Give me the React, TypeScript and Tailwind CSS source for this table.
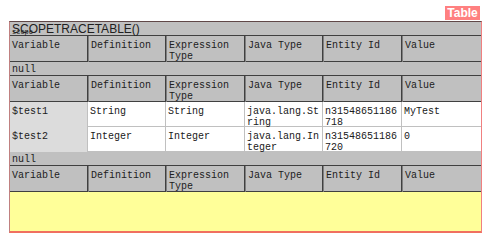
const mono = "font-['Liberation_Mono','Courier_New',monospace]";

const cols = "grid grid-cols-[78px_78px_79px_78px_79px_1fr]";

const HeaderRow = () => {
    const names = ["Variable", "Definition", "Expression Type", "Java Type", "Entity Id", "Value"];
    return (
        <div className={`${cols} h-[26px] bg-[#c0c0c0] border-b border-[#404040]`}>
            {names.map((n, i) => (
                <div key={n} className={`px-[2px] pt-[4px] text-[10px] leading-[11px] text-[#202020] ${mono} ${i < 5 ? "border-r border-[#404040]" : ""} ${i > 0 ? "border-l border-l-[#808080]" : ""}`}>
                    {n}
                </div>
            ))}
        </div>
    )
}

const NullRow = () => (
    <div className={`h-[14px] bg-[#c0c0c0] border-b border-[#404040] px-[2px] pt-[2px] text-[10px] leading-[11px] text-[#202020] ${mono}`}>null</div>
)

const DataRow = ({ cells }: { cells: string[] }) => (
    <div className={`${cols} h-[25px] bg-white border-b border-[#c0c0c0]`}>
        {cells.map((c, i) => (
            <div key={i} className={`px-[2px] pt-[4px] text-[10px] leading-[11px] text-[#202020] break-all ${mono} ${i === 0 ? "bg-[#dcdcdc]" : ""} ${i < 5 ? "border-r border-[#c0c0c0]" : ""}`}>
                {c}
            </div>
        ))}
    </div>
)

export default function App() {
    return (
        <div className="relative w-[485px] h-[243px] bg-white pt-[21px] pl-[9px] overflow-hidden">
            <div className="absolute left-[445px] top-[6px] w-[35px] h-[14px] bg-[#ff8080] text-white font-bold text-[12px] leading-[14px] text-center font-['Liberation_Sans',Arial,sans-serif]">
                Table
            </div>

            <div className="w-[473px] h-[212px] flex flex-col bg-[#ffff99] border-l border-l-[#c08080] border-r border-r-[#f08080] border-b-2 border-b-[#f07060] border-t border-t-[#604848]">
                <div className="relative h-[14px] bg-[#c0c0c0] border-b border-[#404040] px-[2px] text-[12px] leading-[14px] text-[#202020] font-['Liberation_Sans',Arial,sans-serif]">
                    SCOPETRACETABLE()
                    <span className={`absolute left-[2px] top-[7px] text-[7px] leading-[7px] ${mono}`}>scope</span>
                </div>
                <HeaderRow />
                <NullRow />
                <HeaderRow />
                <DataRow cells={["$test1", "String", "String", "java.lang.String", "n31548651186718", "MyTest"]} />
                <DataRow cells={["$test2", "Integer", "Integer", "java.lang.Integer", "n31548651186720", "0"]} />
                <NullRow />
                <HeaderRow />
            </div>
        </div>
    )
}
